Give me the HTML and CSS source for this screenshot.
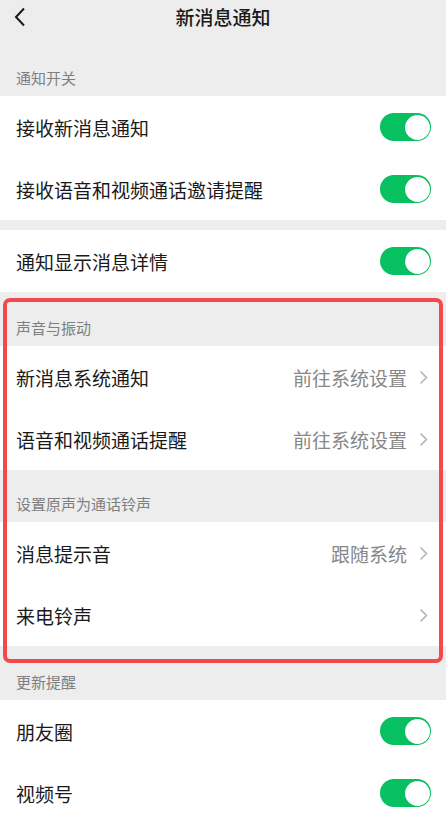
FILE: index.html
```html
<!DOCTYPE html>
<html lang="zh-CN">
<head>
<meta charset="utf-8">
<title>新消息通知</title>
<link rel="stylesheet" href="styles.css">
</head>
<body>
<div class="page">
  <header class="nav">
    <svg class="back" width="12" height="20" viewBox="0 0 12 20"><path d="M10 1.5 L2 10 L10 18.5" fill="none" stroke="#1a1a1a" stroke-width="2"/></svg>
    <div class="title">新消息通知</div>
  </header>

  <div class="sec-head h-first">通知开关</div>
  <div class="group">
    <div class="row"><span class="label">接收新消息通知</span><span class="switch"><span class="knob"></span></span></div>
    <div class="row"><span class="label">接收语音和视频通话邀请提醒</span><span class="switch"><span class="knob"></span></span></div>
  </div>
  <div class="gap"></div>
  <div class="group">
    <div class="row"><span class="label">通知显示消息详情</span><span class="switch"><span class="knob"></span></span></div>
  </div>

  <div class="sec-head h-54">声音与振动</div>
  <div class="group">
    <div class="row"><span class="label">新消息系统通知</span><span class="extra">前往系统设置<svg class="chev" width="9" height="15" viewBox="0 0 9 15"><path d="M1.5 1.5 L7.5 7.5 L1.5 13.5" fill="none" stroke="#b4b4b4" stroke-width="1.6"/></svg></span></div>
    <div class="row"><span class="label">语音和视频通话提醒</span><span class="extra">前往系统设置<svg class="chev" width="9" height="15" viewBox="0 0 9 15"><path d="M1.5 1.5 L7.5 7.5 L1.5 13.5" fill="none" stroke="#b4b4b4" stroke-width="1.6"/></svg></span></div>
  </div>
  <div class="sec-head h-52">设置原声为通话铃声</div>
  <div class="group">
    <div class="row"><span class="label">消息提示音</span><span class="extra">跟随系统<svg class="chev" width="9" height="15" viewBox="0 0 9 15"><path d="M1.5 1.5 L7.5 7.5 L1.5 13.5" fill="none" stroke="#b4b4b4" stroke-width="1.6"/></svg></span></div>
    <div class="row"><span class="label">来电铃声</span><span class="extra"><svg class="chev" width="9" height="15" viewBox="0 0 9 15"><path d="M1.5 1.5 L7.5 7.5 L1.5 13.5" fill="none" stroke="#b4b4b4" stroke-width="1.6"/></svg></span></div>
  </div>

  <div class="sec-head h-54">更新提醒</div>
  <div class="group">
    <div class="row"><span class="label">朋友圈</span><span class="switch"><span class="knob"></span></span></div>
    <div class="row"><span class="label">视频号</span><span class="switch"><span class="knob"></span></span></div>
  </div>

  <div class="highlight"></div>
</div>
</body>
</html>
```

FILE: styles.css
```css
* { box-sizing: border-box; }
html, body { margin: 0; padding: 0; }
body {
  background: #ededed;
  font-family: "Noto Sans CJK SC", "Noto Sans", sans-serif;
  color: #1a1a1a;
}
.page {
  position: relative;
  width: 446px;
  height: 814px;
  overflow: hidden;
  background: #ededed;
}
.nav {
  position: relative;
  height: 34px;
  display: flex;
  align-items: center;
  justify-content: center;
}
.back {
  position: absolute;
  left: 14px;
  top: 7px;
}
.title {
  font-size: 19px;
  font-weight: 500;
  line-height: 34px;
  letter-spacing: 0;
  color: #1a1a1a;
}
.sec-head {
  display: flex;
  align-items: flex-end;
  padding: 0 16px 8px;
  font-size: 15px;
  line-height: 20px;
  color: #7f7f7f;
}
.h-first { height: 62px; }
.h-54 { height: 54px; }
.h-52 { height: 52px; }
.group { background: #fff; }
.row {
  height: 62px;
  display: flex;
  align-items: center;
  justify-content: space-between;
  padding: 0 15px 0 16px;
  font-size: 19px;
}
.label { color: #1a1a1a; }
.gap { height: 10px; }
.extra {
  display: flex;
  align-items: center;
  gap: 12px;
  color: #878787;
  font-size: 19px;
  padding-right: 3px;
}
.chev { display: block; }
.switch {
  position: relative;
  width: 51px;
  height: 28px;
  border-radius: 14px;
  background: #07c160;
}
.knob {
  position: absolute;
  right: 1.5px;
  top: 1.5px;
  width: 25px;
  height: 25px;
  border-radius: 50%;
  background: #fff;
  box-shadow: 0 0 0 0.5px rgba(0,0,0,0.08);
}
.highlight {
  position: absolute;
  left: 3px;
  top: 298px;
  width: 440px;
  height: 365px;
  border: 4px solid #f24a4c;
  border-radius: 7px;
  pointer-events: none;
}
```
